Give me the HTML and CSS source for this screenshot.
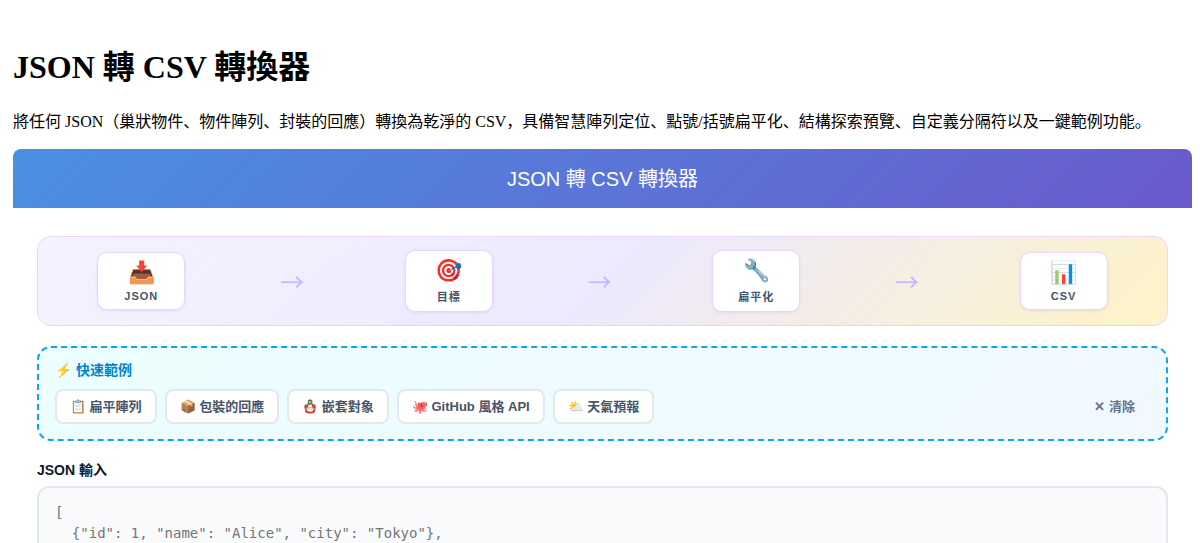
FILE: index.html
```
<!DOCTYPE html>
<html lang="zh">
<head>
  <meta charset="UTF-8">
  <meta name="viewport" content="width=device-width, initial-scale=1">
  <title>JSON 轉 CSV 轉換器</title>
  <link rel="stylesheet" href="styles.css">
</head>
<body>

  <div class="container">
    <h1>JSON 轉 CSV 轉換器</h1>
    <p>將任何 JSON（巢狀物件、物件陣列、封裝的回應）轉換為乾淨的 CSV，具備智慧陣列定位、點號/括號扁平化、結構探索預覽、自定義分隔符以及一鍵範例功能。</p>

    <div class="tool">
      <div class="tool-header">JSON 轉 CSV 轉換器</div>

      <div class="tool-body">
        <!-- Conversion steps -->
        <div class="flow">
          <div class="step"><span class="step-icon">📥</span><span class="step-name">JSON</span></div>
          <span class="arrow">→</span>
          <div class="step"><span class="step-icon">🎯</span><span class="step-name">目標</span></div>
          <span class="arrow">→</span>
          <div class="step"><span class="step-icon">🔧</span><span class="step-name">扁平化</span></div>
          <span class="arrow">→</span>
          <div class="step"><span class="step-icon">📊</span><span class="step-name">CSV</span></div>
        </div>

        <!-- Quick examples -->
        <div class="examples">
          <div class="examples-title">⚡ 快速範例</div>
          <div class="examples-row">
            <button type="button" class="chip">📋 扁平陣列</button>
            <button type="button" class="chip">📦 包裝的回應</button>
            <button type="button" class="chip">🪆 嵌套對象</button>
            <button type="button" class="chip">🐙 GitHub 風格 API</button>
            <button type="button" class="chip">⛅ 天氣預報</button>
            <button type="button" class="chip clear">✕ 清除</button>
          </div>
        </div>

        <label class="field-label" for="jsonInput">JSON 輸入</label>
        <textarea class="json-input" id="jsonInput" rows="10" spellcheck="false" placeholder='[
  {"id": 1, "name": "Alice", "city": "Tokyo"},
  {"id": 2, "name": "Bob", "city": "Paris"}
]'></textarea>
      </div>
    </div>
  </div>

</body>
</html>
```
FILE: styles.css
```
* {
  box-sizing: border-box;
}

body {
  font-family: "Liberation Serif", "Noto Sans CJK JP", serif;
  margin: 20px 8px;
}

.container {
  display: flow-root;
  background: #fff;
  padding-left: 5px;
  box-shadow: 0 4px 12px rgba(0, 0, 0, 0.2);
}

h1 {
  font-size: 32px;
  margin: 21px 0;
}

p {
  font-size: 16px;
  margin: 16px 0 17px;
}

.tool {
  font-family: "Liberation Sans", "Noto Sans CJK JP", sans-serif;
}

.tool-header {
  background: linear-gradient(135deg, #4a90e2, #6a5acd);
  color: #fff;
  font-size: 20px;
  text-align: center;
  padding: 14px 15px 16px;
  border-radius: 8px 8px 0 0;
}

.tool-body {
  padding: 28px 24px;
}

.flow {
  display: flex;
  align-items: center;
  justify-content: space-around;
  padding: 13px 12px;
  margin-bottom: 20px;
  background: linear-gradient(135deg, #f5f3ff 0%, #ede9fe 50%, #fef3c7 100%);
  border: 1px solid #e9d5ff;
  border-radius: 14px;
}

.step {
  display: flex;
  flex-direction: column;
  align-items: center;
  gap: 5px;
  min-width: 88px;
  padding: 8px 12px 7px;
  background: #fff;
  border: 1px solid #e9d5ff;
  border-radius: 10px;
  box-shadow: 0 1px 3px rgba(124, 58, 237, 0.12);
}

.step-icon {
  font-size: 22px;
  line-height: 24px;
}

.step-name {
  font-size: 11px;
  font-weight: 700;
  letter-spacing: 1px;
  color: #475569;
}

.arrow {
  font-family: "Noto Sans CJK JP", sans-serif;
  color: #c4b5fd;
  font-size: 24px;
  line-height: 32px;
  padding-right: 6px;
}

.examples {
  padding: 11px 16px 15px;
  margin-bottom: 18px;
  background: linear-gradient(135deg, #ecfeff, #f0f9ff);
  border: 2px dashed #0ea5e9;
  border-radius: 14px;
}

.examples-title {
  color: #0284c7;
  font-size: 14px;
  font-weight: 700;
  margin-bottom: 10px;
}

.examples-row {
  display: flex;
  flex-wrap: wrap;
  gap: 8px;
}

.chip {
  font-family: inherit;
  font-size: 13px;
  font-weight: 600;
  color: #475569;
  background: #fff;
  border: 2px solid #e2e8f0;
  border-radius: 8px;
  padding: 5px 13px 7px;
  cursor: pointer;
}

.clear {
  margin-left: auto;
  color: #64748b;
  background: transparent;
  border-color: transparent;
}

.field-label {
  display: block;
  color: #0f172a;
  font-size: 14px;
  font-weight: 700;
  margin-bottom: 7px;
}

.json-input {
  display: block;
  width: 100%;
  font-family: "DejaVu Sans Mono", monospace;
  font-size: 14px;
  line-height: 21px;
  padding: 14px 16px;
  background: #f8fafc;
  border: 2px solid #e2e8f0;
  border-radius: 12px;
  resize: vertical;
}
```
